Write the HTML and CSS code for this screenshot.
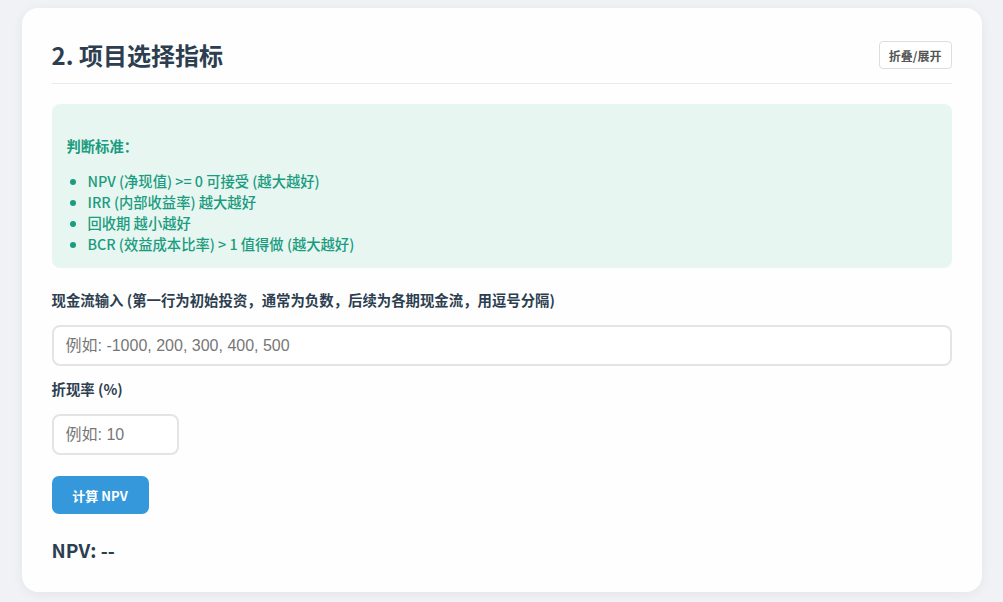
FILE: index.html
```html
<!DOCTYPE html>
<html lang="zh-CN">
<head>
    <meta charset="UTF-8">
    <meta name="viewport" content="width=device-width, initial-scale=1.0">
    <title>项目选择指标</title>
    <link rel="stylesheet" href="styles.css">
</head>
<body>
    <div class="section-card">
        <div class="section-header">
            <h2 class="section-title">2. 项目选择指标</h2>
            <button class="toggle-btn">折叠/展开</button>
        </div>

        <div class="info-box">
            <h4>判断标准：</h4>
            <ul>
                <li>NPV (净现值) &gt;= 0 可接受 (越大越好)</li>
                <li>IRR (内部收益率) 越大越好</li>
                <li>回收期 越小越好</li>
                <li>BCR (效益成本比率) &gt; 1 值得做 (越大越好)</li>
            </ul>
        </div>

        <div class="form-group">
            <label for="cashFlows">现金流输入 (第一行为初始投资，通常为负数，后续为各期现金流，用逗号分隔)</label>
            <input type="text" id="cashFlows" class="text-input" placeholder="例如: -1000, 200, 300, 400, 500">
        </div>

        <div class="form-group">
            <label for="discountRate">折现率 (%)</label>
            <input type="text" id="discountRate" class="text-input small" placeholder="例如: 10">
        </div>

        <button class="calc-btn">计算 NPV</button>

        <div class="result">NPV: --</div>
    </div>
</body>
</html>
```

FILE: styles.css
```css
body {
    margin: 0;
    padding: 8px 0;
    background-color: #f0f2f5;
    font-family: "Noto Sans CJK SC", "Noto Sans", sans-serif;
    color: #2c3e50;
}

.section-card {
    max-width: 960px;
    margin: 0 auto;
    box-sizing: border-box;
    background-color: #fefefe;
    border-radius: 16px;
    padding: 30px 30px 28px;
    box-shadow: 0 2px 12px rgba(0, 0, 0, 0.06);
}

.section-header {
    display: flex;
    justify-content: space-between;
    align-items: center;
    padding-bottom: 11px;
    border-bottom: 1px solid #e8eaec;
    margin-bottom: 20px;
}

.section-title {
    margin: 0;
    font-size: 24px;
    line-height: 34px;
    font-weight: 700;
    color: #2c3e50;
}

.toggle-btn {
    font-family: inherit;
    font-size: 12px;
    font-weight: 700;
    color: #555;
    background-color: #fff;
    border: 1px solid #ddd;
    border-radius: 4px;
    height: 28px;
    padding: 0 9px;
    cursor: pointer;
}

.info-box {
    background-color: #e8f6f2;
    border-radius: 8px;
    padding: 15px 15px 14px;
    color: #1a9c7e;
    margin-bottom: 22px;
}

.info-box h4 {
    margin: 17px 0 14px;
    font-size: 14.3px;
    line-height: 20px;
    font-weight: 700;
}

.info-box ul {
    margin: 0;
    padding-left: 21px;
}

.info-box li {
    font-size: 14.3px;
    line-height: 21px;
    font-weight: 500;
}

.form-group {
    margin-bottom: 13px;
}

.form-group label {
    display: block;
    font-size: 14.4px;
    line-height: 20px;
    font-weight: 700;
    color: #2c3e50;
    margin-bottom: 15px;
}

.text-input {
    display: block;
    width: 100%;
    height: 41px;
    box-sizing: border-box;
    padding: 0 12px;
    font-family: "Liberation Sans", "Noto Sans CJK SC", sans-serif;
    font-size: 16px;
    border: 2px solid #e2e4e6;
    border-radius: 8px;
    outline: none;
    background-color: #fff;
}

.text-input::placeholder {
    color: #777;
}

.text-input.small {
    width: 127px;
}

.calc-btn {
    display: block;
    margin-top: 21px;
    width: 97px;
    height: 38px;
    font-family: inherit;
    font-size: 13px;
    font-weight: 700;
    color: #fff;
    background-color: #3498db;
    border: none;
    border-radius: 7px;
    cursor: pointer;
}

.result {
    margin-top: 22px;
    font-size: 19px;
    line-height: 28px;
    font-weight: 700;
    color: #2c3e50;
}
```
